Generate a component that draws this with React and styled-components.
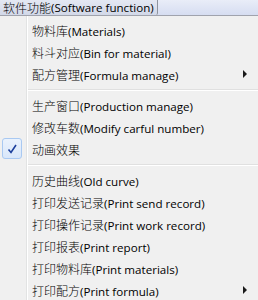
import React from 'react';
import styled, {createGlobalStyle} from 'styled-components';

const GlobalStyle = createGlobalStyle`
  html, body {
    margin: 0;
    padding: 0;
    background: #f0f0f0;
  }
  body {
    font-family: "Open Sans", "Noto Sans CJK SC", sans-serif;
    font-size: 11.6px;
    color: #000;
  }
`;

const Frame = styled.div`
  width: 258px;
  height: 300px;
  overflow: hidden;
  background: #f0f0f0;
`;

const MenuBar = styled.div`
  display: flex;
  height: 15px;
  background: linear-gradient(#e9edf8, #d6ddf1);
  border-bottom: 1px solid #a0a3ad;
`;

const BarItem = styled.div`
  display: flex;
  align-items: center;
  padding: 0 3px 0 3px;
  height: 15px;
  box-sizing: border-box;
  background: ${(p) => (p.$open ? 'linear-gradient(#e4e8f3, #d2d8e8)' : 'transparent')};
  border-right: ${(p) => (p.$open ? '1px solid #8e939e' : 'none')};
  border-bottom-right-radius: 2px;
  white-space: nowrap;
`;

const Menu = styled.div`
  display: flex;
  flex-direction: column;
  padding-top: 3px;
  /* icon gutter divider */
  background: linear-gradient(
    to right,
    transparent 26px,
    #e2e3e3 26px,
    #e2e3e3 27px,
    #ffffff 27px,
    #ffffff 28px,
    transparent 28px
  );
`;

const Item = styled.div`
  display: flex;
  align-items: center;
  height: 22px;
  white-space: nowrap;
`;

const IconCell = styled.div`
  display: flex;
  align-items: center;
  justify-content: center;
  width: 20px;
  height: 21px;
  margin: 0 10px 0 2px;
  box-sizing: border-box;
  border: 1px solid ${(p) => (p.$checked ? '#a9c9f2' : 'transparent')};
  border-radius: 3px;
  background: ${(p) => (p.$checked ? 'linear-gradient(#eaf2fd, #d9e7fa)' : 'transparent')};
  align-self: flex-start;
`;

const Label = styled.div`
  flex: 1;
`;

const Cn = styled.span`
  font-family: "Noto Sans CJK SC", sans-serif;
  font-size: 12px;
  font-weight: 300;
`;

const Arrow = styled.span`
  width: 0;
  height: 0;
  margin-right: 11px;
  border-top: 4px solid transparent;
  border-bottom: 4px solid transparent;
  border-left: 4px solid #1a1a1a;
`;

const Separator = styled.div`
  height: 1px;
  margin: 4px 0 3px 28px;
  background: #e0e0e0;
  border-bottom: 1px solid #ffffff;
`;

const items = [
  {cn: '物料库', en: '(Materials)'},
  {cn: '料斗对应', en: '(Bin for material)'},
  {cn: '配方管理', en: '(Formula manage)', sub: true},
  'sep',
  {cn: '生产窗口', en: '(Production manage)'},
  {cn: '修改车数', en: '(Modify carful number)'},
  {cn: '动画效果', en: '', checked: true},
  'sep',
  {cn: '历史曲线', en: '(Old curve)'},
  {cn: '打印发送记录', en: '(Print send record)'},
  {cn: '打印操作记录', en: '(Print work record)'},
  {cn: '打印报表', en: '(Print report)'},
  {cn: '打印物料库', en: '(Print materials)'},
  {cn: '打印配方', en: '(Print formula)', sub: true},
];

const CheckMark = () => (
  <svg width="12" height="12" viewBox="0 0 12 12">
    <path d="M2.5 6.5 L5 9.5 L10 2" fill="none" stroke="#1c3f9c" strokeWidth="1.6" />
  </svg>
);

export default function App() {
  return (
    <Frame>
      <GlobalStyle />
      <MenuBar>
        <BarItem $open>
          <Cn>软件功能</Cn>(Software function)
        </BarItem>
      </MenuBar>
      <Menu>
        {items.map((it, i) =>
          it === 'sep' ? (
            <Separator key={`sep-${i}`} />
          ) : (
            <Item key={it.cn}>
              <IconCell $checked={it.checked}>{it.checked && <CheckMark />}</IconCell>
              <Label>
                <Cn>{it.cn}</Cn>
                {it.en}
              </Label>
              {it.sub && <Arrow />}
            </Item>
          )
        )}
      </Menu>
    </Frame>
  );
}
